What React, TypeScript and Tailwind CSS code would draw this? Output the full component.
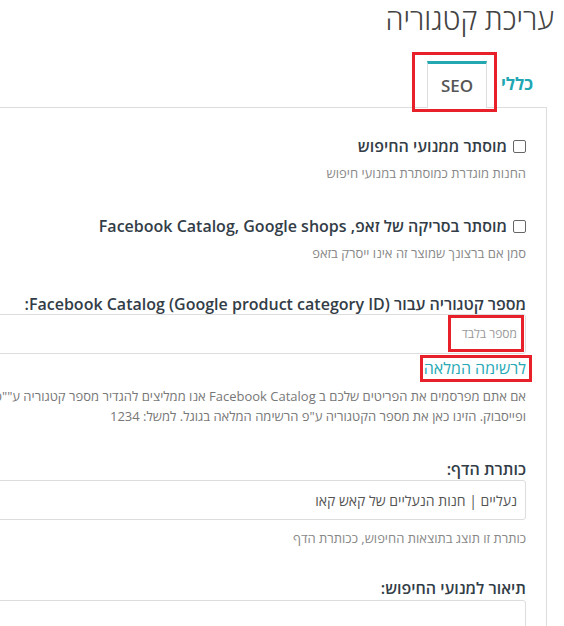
export default function App() {
  return (
    <div
      dir="rtl"
      className="w-[564px] h-[626px] overflow-hidden bg-white text-[#333d47]"
      style={{ fontFamily: '"Open Sans", "Noto Sans", "DejaVu Sans", sans-serif' }}
    >
      <h1 className="pt-[2px] pr-[10px] text-[29px] leading-[34px] font-light text-[#444]">עריכת קטגוריה</h1>

      {/* tabs */}
      <div className="mt-[25px] mr-[17px] flex relative z-10 -mb-px">
        <div className="w-[60px] h-[46px] flex items-center justify-center text-[17px] font-bold text-[#21a6b3]">
          כללי
        </div>
        <div className="relative w-[60px] h-[47px] bg-white border-x border-[#ddd] border-t-[3px] border-t-[#23a7b1] flex items-center justify-center text-[17px] font-semibold text-[#555]">
          SEO
          <span className="absolute -top-[12px] -bottom-[4px] -left-[16px] -right-[11px] border-[3px] border-[#e8202a]" />
        </div>
      </div>

      {/* panel */}
      <div className="mr-[17px] -ml-[200px] border-t border-r border-[#ddd] pr-[20px] pl-[20px] pt-[28px]">
        <label className="flex items-center gap-[6px] text-[16px] leading-[20px] font-semibold">
          <span className="w-[13px] h-[13px] border border-[#666] rounded-[2px] shrink-0" />
          מוסתר ממנועי החיפוש
        </label>
        <p className="mt-[8px] text-[13px] leading-[18px] text-[#888]">החנות מוגדרת כמוסתרת במנועי חיפוש</p>

        <label className="mt-[34px] flex items-center gap-[6px] text-[16px] leading-[20px] font-semibold">
          <span className="w-[13px] h-[13px] border border-[#666] rounded-[2px] shrink-0" />
          מוסתר בסריקה של זאפ, Facebook Catalog, Google shops
        </label>
        <p className="mt-[8px] text-[13px] leading-[18px] text-[#888]">סמן אם ברצונך שמוצר זה אינו ייסרק בזאפ</p>

        <div className="mt-[32px] text-[16px] leading-[20px] font-semibold">
          מספר קטגוריה עבור Facebook Catalog (Google product category ID):
        </div>
        <div className="relative">
          <div className="h-[40px] border border-[#ddd] rounded-[3px] px-[8px] flex items-center text-[12px] text-[#999]">
            מספר בלבד
          </div>
          <span className="absolute top-[1px] bottom-[2px] right-[2px] w-[76px] border-[3px] border-[#e8202a]" />
        </div>
        <div className="mt-[2px]">
          <a className="relative inline-block text-[16px] leading-[22px] text-[#26a9b5]">
            לרשימה המלאה
            <span className="absolute -top-[2px] -bottom-[3px] -right-[6px] -left-[4px] border-[3px] border-[#e8202a]" />
          </a>
        </div>
        <p className="mt-[6px] text-[13px] leading-[20px] text-[#777] whitespace-nowrap">
          אם אתם מפרסמים את הפריטים שלכם ב Facebook Catalog אנו ממליצים להגדיר מספר קטגוריה ע""פ גוגל
          <br />
          ופייסבוק. הזינו כאן את מספר הקטגוריה ע"פ הרשימה המלאה בגוגל. למשל: 1234
        </p>

        <div className="mt-[33px] text-[16px] leading-[20px] font-semibold">כותרת הדף:</div>
        <div className="mt-px h-[40px] border border-[#ddd] rounded-[3px] px-[8px] flex items-center text-[14px] text-[#555]">
          נעליים | חנות הנעליים של קאש קאו
        </div>
        <p className="mt-[9px] text-[13px] leading-[18px] text-[#888]">כותרת זו תוצג בתוצאות החיפוש, ככותרת הדף</p>

        <div className="mt-[31px] text-[16px] leading-[20px] font-semibold">תיאור למנועי החיפוש:</div>
        <div className="mt-[2px] h-[80px] border border-[#ddd] rounded-[3px]" />
      </div>
    </div>
  );
}
